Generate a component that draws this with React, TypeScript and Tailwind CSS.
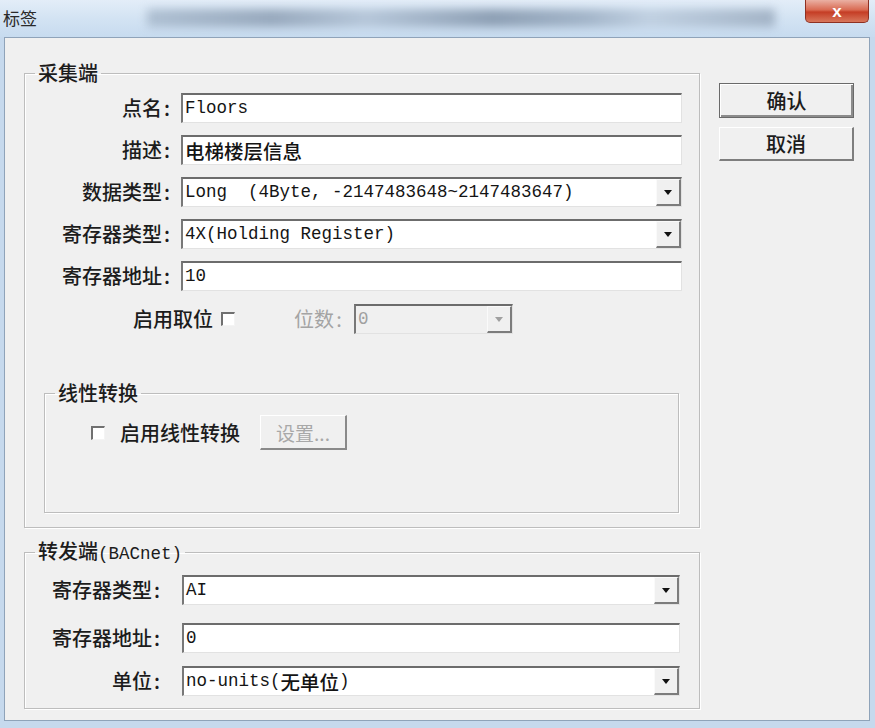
import React from 'react';

const CJK = "font-['Noto_Sans_CJK_SC',sans-serif]";
const MONO = "font-['Liberation_Mono','Noto_Sans_CJK_SC',monospace]";

// 把中文部分单独用 CJK 字体渲染
const Val: React.FC<{ text: string; disabled?: boolean }> = ({ text, disabled }) => {
  const parts = text.split(/([\u4e00-\u9fff]+)/);
  return (
    <div
      className={`flex-1 pl-[2px] flex items-center whitespace-pre ${MONO} text-[17.5px] leading-none ${
        disabled ? 'text-[#a0a0a0]' : 'text-[#141414]'
      }`}
    >
      {parts.map((p, i) =>
        /[\u4e00-\u9fff]/.test(p) ? (
          <span key={i} className={`${CJK} text-[19.5px] font-medium`}>
            {p}
          </span>
        ) : (
          <span key={i}>{p}</span>
        )
      )}
    </div>
  );
};

const Arrow: React.FC<{ disabled?: boolean }> = ({ disabled }) => (
  <svg width="8" height="5" viewBox="0 0 8 5">
    <polygon points="0,0 8,0 4,5" fill={disabled ? '#a0a0a0' : '#111111'} />
  </svg>
);

const Field: React.FC<{ value: string; className: string; combo?: boolean; disabled?: boolean }> = ({
  value,
  className,
  combo,
  disabled,
}) => (
  <div
    className={`flex h-[30px] border-t-2 border-l-2 border-t-[#6c6c6c] border-l-[#787878] border-r border-b border-r-[#e2e2e2] border-b-[#e2e2e2] ${
      disabled ? 'bg-[#f0f0f0]' : 'bg-white'
    } ${className}`}
  >
    <Val text={value} disabled={disabled} />
    {combo && (
      <div className="w-[25px] flex items-center justify-center bg-[#f0f0f0] border-t border-l border-t-[#fafafa] border-l-[#fafafa] border-r-2 border-b-2 border-r-[#7c7c7c] border-b-[#7c7c7c]">
        <Arrow disabled={disabled} />
      </div>
    )}
  </div>
);

const Label: React.FC<{ text: string; className: string }> = ({ text, className }) => (
  <div className={`text-right text-[20px] font-medium leading-none text-[#1c1c1c] ${className}`}>
    {text}
    <span className="inline-block w-[10px] text-center">:</span>
  </div>
);

const CheckBox: React.FC<{ className?: string }> = ({ className }) => (
  <span
    className={`block w-[14px] h-[14px] bg-white border-t-2 border-l-2 border-t-[#707070] border-l-[#707070] border-r border-b border-r-[#f4f4f4] border-b-[#f4f4f4] ${
      className ?? ''
    }`}
  />
);

const groupBox =
  'border border-[#bdbdbd] shadow-[inset_1px_1px_0_#ffffff,1px_1px_0_#ffffff]';
const legendCls = 'ml-[10px] px-[3px] text-[20px] font-medium leading-[22px] text-[#1c1c1c]';

export default function App() {
  return (
    <div className={`w-[875px] h-[728px] bg-[#c6d9ed] flex flex-col ${CJK}`}>
      {/* 标题栏 */}
      <div className="h-[37px] flex items-start bg-[linear-gradient(180deg,#e3edf8,#d3e3f3_50%,#c7dbef)]">
        <div className="pl-[3px] pt-[8px] text-[17px] leading-[20px] text-[#2a2a2a]">标签</div>
        <div className="flex-1 mt-[9px] ml-[110px] mr-[30px] h-[18px] blur-[5px] opacity-70 bg-[linear-gradient(90deg,#9fb1c5,#7e90a6_20%,#a9bace_35%,#6f8299_55%,#8ea1b7_70%,#b8c8da_80%,#8e9fb3)]" />
        <div className="mr-[6px] w-[64px] h-[23px] rounded-b-[5px] border border-t-0 border-[#8e3022] bg-[linear-gradient(180deg,#eab0a3,#d96a52_45%,#c53d25_55%,#d8775c)] flex items-center justify-center">
          <span className="font-['Liberation_Sans',sans-serif] font-bold text-[17px] leading-none text-white">x</span>
        </div>
      </div>

      {/* 客户区 */}
      <div className="flex-1 ml-[4px] mr-[5px] mb-[7px] bg-[#f0f0f0] border border-[#8fa3b9] flex">
        <div className="pl-[19px] pt-[24px] flex flex-col">
          <fieldset className={`w-[676px] h-[466px] ${groupBox}`}>
            <legend className={legendCls}>采集端</legend>
            <div className="pt-[9px] flex flex-col gap-[12px]">
              {[
                { l: '点名', v: 'Floors' },
                { l: '描述', v: '电梯楼层信息' },
                { l: '数据类型', v: 'Long  (4Byte, -2147483648~2147483647)', c: true },
                { l: '寄存器类型', v: '4X(Holding Register)', c: true },
                { l: '寄存器地址', v: '10' },
              ].map((r) => (
                <div key={r.l} className="flex items-center">
                  <Label text={r.l} className="w-[147px]" />
                  <Field value={r.v} combo={r.c} className="ml-[9px] w-[501px]" />
                </div>
              ))}
            </div>

            <div className="mt-[13px] flex items-center h-[30px]">
              <span className="ml-[108px] text-[20px] font-medium leading-none text-[#1c1c1c]">启用取位</span>
              <CheckBox className="ml-[8px] w-[13px] h-[13px]" />
              <span className="ml-[59px] text-[20px] leading-none text-[#a4a4a4]">
                位数<span className="inline-block w-[10px] text-center">:</span>
              </span>
              <Field value="0" combo disabled className="ml-[10px] w-[159px]" />
            </div>

            <fieldset className={`mt-[48px] ml-[19px] w-[635px] h-[131px] ${groupBox}`}>
              <legend className={legendCls}>线性转换</legend>
              <div className="pt-[11px] flex items-center h-[46px]">
                <CheckBox className="ml-[46px]" />
                <span className="ml-[15px] text-[20px] font-medium leading-none text-[#1c1c1c]">启用线性转换</span>
                <button
                  disabled
                  className="ml-[20px] w-[87px] h-[35px] bg-[#f0f0f0] border-t border-l border-t-[#ffffff] border-l-[#ffffff] border-r-2 border-b-2 border-r-[#8a8a8a] border-b-[#8a8a8a] text-[19px] leading-none text-[#a8a8a8]"
                >
                  设置...
                </button>
              </div>
            </fieldset>
          </fieldset>

          <fieldset className={`mt-[12px] w-[676px] h-[169px] ${groupBox}`}>
            <legend className={legendCls}>
              转发端<span className={`${MONO} font-normal text-[17.5px]`}>(BACnet)</span>
            </legend>
            <div className="pt-[10px] flex flex-col">
              <div className="flex items-center">
                <Label text="寄存器类型" className="w-[137px]" />
                <Field value="AI" combo className="ml-[20px] w-[498px]" />
              </div>
              <div className="flex items-center mt-[18px]">
                <Label text="寄存器地址" className="w-[137px]" />
                <Field value="0" className="ml-[20px] w-[498px]" />
              </div>
              <div className="flex items-center mt-[13px]">
                <Label text="单位" className="w-[137px]" />
                <Field value="no-units(无单位)" combo className="ml-[20px] w-[498px]" />
              </div>
            </div>
          </fieldset>
        </div>

        {/* 右侧按钮 */}
        <div className="ml-[19px] pt-[45px] flex flex-col gap-[9px]">
          <button className="w-[135px] h-[35px] bg-[#f0f0f0] border border-[#6a6a6a] shadow-[inset_1px_1px_0_#ffffff,inset_-2px_-2px_0_#8c8c8c] text-[20px] font-medium leading-none text-[#1c1c1c]">
            确认
          </button>
          <button className="w-[135px] h-[34px] bg-[#f0f0f0] border-t border-l border-t-[#ffffff] border-l-[#ffffff] border-r-2 border-b-2 border-r-[#7e7e7e] border-b-[#7e7e7e] text-[20px] font-medium leading-none text-[#1c1c1c]">
            取消
          </button>
        </div>
      </div>
    </div>
  );
}
